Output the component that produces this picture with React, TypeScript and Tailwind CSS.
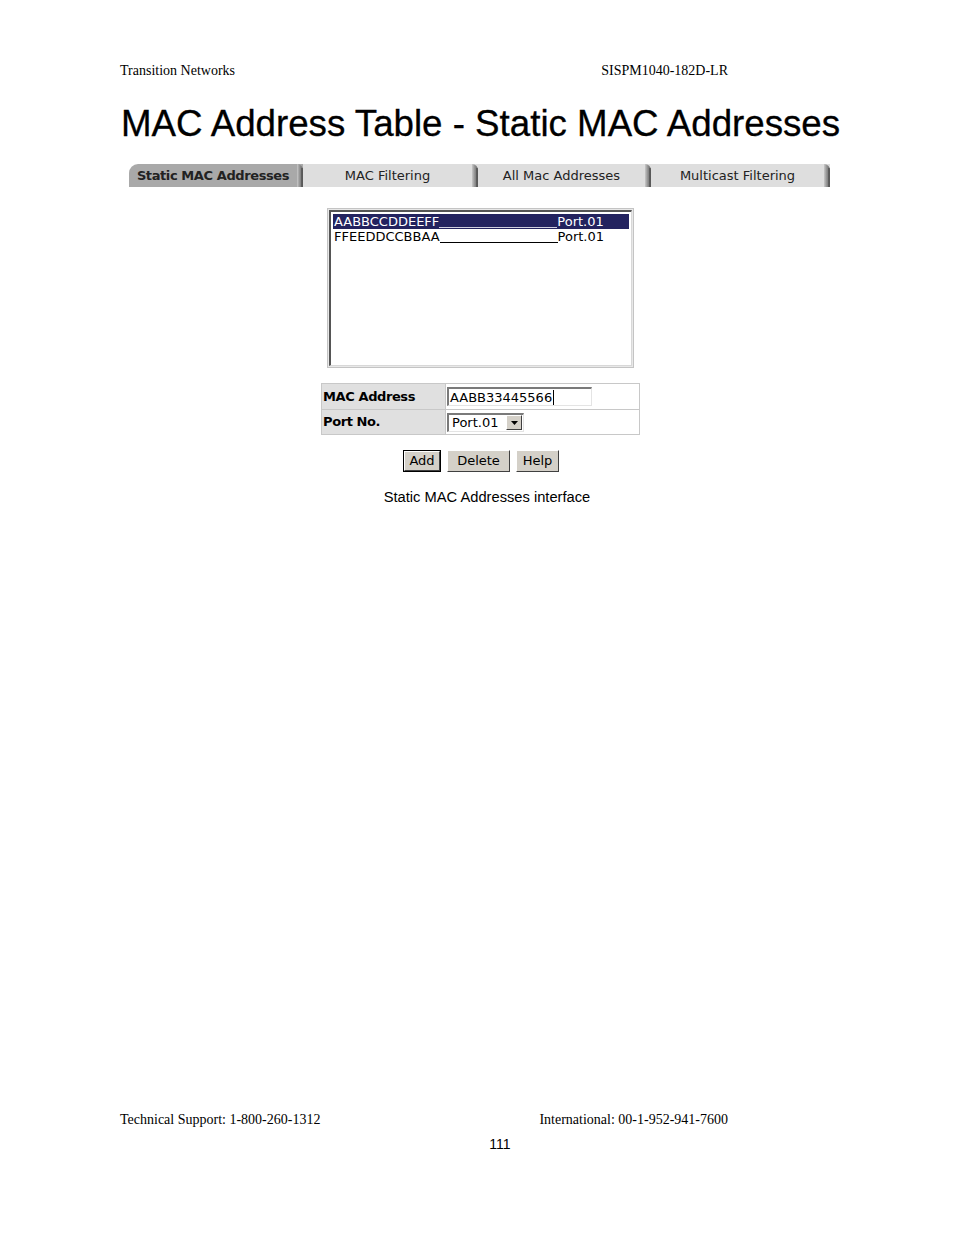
import React from "react";

const verdana = { fontFamily: '"DejaVu Sans", Verdana, sans-serif' };

function Tab({ label, active, width }: { label: string; active?: boolean; width: string }) {
  return (
    <div
      className={`relative h-[23px] ${width} flex items-center justify-center text-[13px] text-[#222] ${
        active ? "bg-[#a9a9a9] font-bold tracking-[-0.4px] rounded-tl-[9px]" : "bg-[#dedede]"
      }`}
      style={verdana}
    >
      <span className="pr-[6px]">{label}</span>
      <div className="absolute right-0 top-0 h-[23px] w-[6px] rounded-tr-[7px] bg-gradient-to-r from-[#c9c9c9] via-[#8d8d8d] to-[#6a6a6a]" />
      <div className="absolute right-0 top-[4px] h-[19px] w-[2px] bg-[#4a4a4a] opacity-60" />
    </div>
  );
}

export default function App() {
  return (
    <div className="w-[954px] h-[1235px] bg-white text-black">
      <div className="pl-[120px] pt-[63px] w-[840px]">
        {/* header */}
        <div
          className="flex justify-between w-[608px] text-[14px] leading-[16px]"
          style={{ fontFamily: '"Liberation Serif", "Times New Roman", serif' }}
        >
          <span>Transition Networks</span>
          <span>SISPM1040-182D-LR</span>
        </div>

        {/* title */}
        <div
          className="mt-[25px] text-[36.7px] leading-[40px] pl-[1px] whitespace-nowrap [-webkit-text-stroke:0.3px_black]"
          style={{ fontFamily: '"Liberation Sans", Arial, sans-serif' }}
        >
          MAC Address Table - Static MAC Addresses
        </div>

        {/* tabs */}
        <div className="mt-[20px] ml-[9px] flex">
          <Tab label="Static MAC Addresses" active width="w-[174px]" />
          <Tab label="MAC Filtering" width="w-[175px]" />
          <Tab label="All Mac Addresses" width="w-[173px]" />
          <Tab label="Multicast Filtering" width="w-[179px]" />
        </div>

        {/* listbox */}
        <div className="mt-[21px] ml-[207px] w-[307px] h-[160px] border border-[#c4c4c4] p-[1px] bg-[#e8e8e8]">
          <div className="w-full h-full border-t-2 border-l-2 border-r border-b border-t-[#555] border-l-[#555] border-r-[#d8d8d8] border-b-[#d8d8d8] bg-white p-[2px]">
            <div
              className="h-[15px] flex items-center bg-[#23235f] text-white text-[13px] leading-[15px] pl-[1px]"
              style={verdana}
            >
              <span>AABBCCDDEEFF</span>
              <span className="inline-block w-[118px] h-[13px] border-b border-[#d0d0e0]" />
              <span>Port.01</span>
            </div>
            <div className="h-[15px] flex items-center text-[13px] leading-[15px] pl-[1px]" style={verdana}>
              <span>FFEEDDCCBBAA</span>
              <span className="inline-block w-[118px] h-[13px] border-b border-black" />
              <span>Port.01</span>
            </div>
          </div>
        </div>

        {/* form */}
        <div className="mt-[15px] ml-[201px] w-[319px] border border-[#c8c8c8] text-[13px]" style={verdana}>
          <div className="flex h-[26px] border-b border-[#c8c8c8]">
            <div className="w-[124px] bg-[#e0e0e0] font-bold tracking-[-0.4px] flex items-center pl-[1px] border-r border-[#c8c8c8]">
              MAC Address
            </div>
            <div className="flex-1 flex items-center pl-[1px] bg-white">
              <div className="w-[145px] h-[19px] border-t-2 border-l-2 border-t-[#7a7a7a] border-l-[#7a7a7a] border-r border-b border-r-[#e4e4e4] border-b-[#e4e4e4] flex items-center pl-[1px] leading-[15px]">
                AABB33445566
                <span className="inline-block w-[1px] h-[15px] bg-black ml-[1px]" />
              </div>
            </div>
          </div>
          <div className="flex h-[24px]">
            <div className="w-[124px] bg-[#e0e0e0] font-bold tracking-[-0.4px] flex items-center pl-[1px] border-r border-[#c8c8c8]">
              Port No.
            </div>
            <div className="flex-1 flex items-center pl-[1px] bg-white">
              <div className="w-[77px] h-[19px] border-t-2 border-l-2 border-t-[#7a7a7a] border-l-[#7a7a7a] border-r border-b border-r-[#e4e4e4] border-b-[#e4e4e4] flex items-center">
                <span className="flex-1 pl-[3px] leading-[15px]">Port.01</span>
                <div className="w-[16px] h-[15px] mr-[1px] bg-[#d4d0c8] border border-t-white border-l-white border-r-[#404040] border-b-[#404040] flex items-center justify-center">
                  <svg width="7" height="4" viewBox="0 0 7 4">
                    <path d="M0 0 H7 L3.5 4 Z" fill="black" />
                  </svg>
                </div>
              </div>
            </div>
          </div>
        </div>

        {/* buttons */}
        <div className="mt-[15px] ml-[283px] flex gap-[6px] text-[13px]" style={verdana}>
          <div className="h-[22px] w-[38px] border border-black">
            <div className="w-full h-full bg-[#d4d0c8] border border-t-white border-l-white border-r-[#404040] border-b-[#404040] flex items-center justify-center">
              Add
            </div>
          </div>
          <div className="h-[22px] w-[63px] bg-[#d4d0c8] border border-t-white border-l-white border-r-[#404040] border-b-[#404040] flex items-center justify-center">
            Delete
          </div>
          <div className="h-[22px] w-[43px] bg-[#d4d0c8] border border-t-white border-l-white border-r-[#404040] border-b-[#404040] flex items-center justify-center">
            Help
          </div>
        </div>

        {/* caption */}
        <div
          className="mt-[16px] w-[720px] pl-[14px] text-center text-[14.7px] leading-[18px]"
          style={{ fontFamily: '"Liberation Sans", Arial, sans-serif' }}
        >
          Static MAC Addresses interface
        </div>

        {/* footer */}
        <div
          className="mt-[606px] flex justify-between w-[608px] text-[14px] leading-[16px]"
          style={{ fontFamily: '"Liberation Serif", "Times New Roman", serif' }}
        >
          <span>Technical Support: 1-800-260-1312</span>
          <span>International: 00-1-952-941-7600</span>
        </div>
        <div
          className="mt-[8px] w-[760px] text-center text-[14px] leading-[16px]"
          style={{ fontFamily: '"Liberation Sans", Arial, sans-serif' }}
        >
          111
        </div>
      </div>
    </div>
  );
}
